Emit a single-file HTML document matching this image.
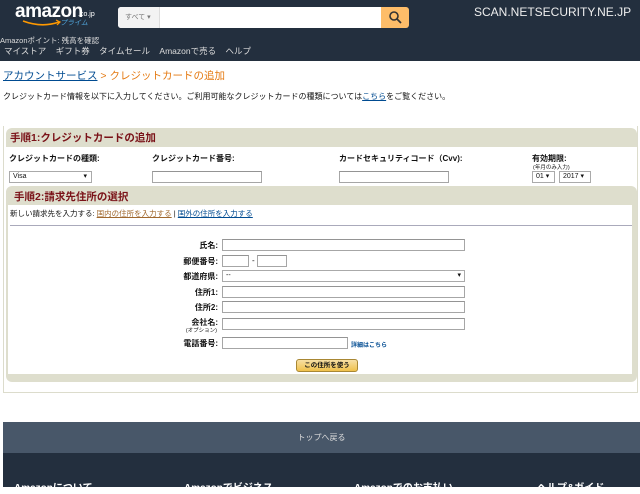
<!DOCTYPE html>
<html><head><meta charset="utf-8"><style>
*{margin:0;padding:0;box-sizing:border-box}
body{width:640px;height:487px;overflow:hidden;background:#fff;font-family:"Liberation Sans","Noto Sans CJK JP",sans-serif;font-size:8px;color:#111;position:relative}
.a{position:absolute;white-space:nowrap}
.in{position:absolute;height:12px;border:1px solid #a6a6a6;background:#fff;border-top-color:#949494}
.sel{position:absolute;height:12px;border:1px solid #aaa;background:#fff;font-size:7px;padding-left:3px;line-height:10px}
.lbl{position:absolute;right:422px;font-weight:bold;font-size:8px;text-align:right}
</style></head><body>
<div class="a" style="left:0;top:0;width:640px;height:61px;background:#232f3e"></div>
<div class="a" style="left:15px;top:1px;color:#fff;font-size:19px;font-weight:bold;letter-spacing:-0.5px">amazon</div>
<div class="a" style="left:78px;top:11px;color:#fff;font-size:7px">.co.jp</div>
<div class="a" style="left:60px;top:18px;color:#4fa3d8;font-size:7px;font-style:italic">プライム</div>
<svg class="a" style="left:22px;top:19px" width="40" height="8"><path d="M1 2 Q20 9 37 3" stroke="#f90" stroke-width="1.6" fill="none"/><path d="M34 1 L38 3 L35 6" stroke="#f90" stroke-width="1.2" fill="none"/></svg>
<div class="a" style="left:118px;top:7px;width:290px;height:21px;background:#fff;border-radius:3px"></div>
<div class="a" style="left:118px;top:7px;width:42px;height:21px;background:#f3f3f3;border-radius:3px 0 0 3px;border-right:1px solid #ddd;color:#777;font-size:7px;line-height:21px;padding-left:7px">すべて ▾</div>
<div class="a" style="left:381px;top:7px;width:28px;height:21px;background:#febd69;border-radius:0 3px 3px 0"></div>
<svg class="a" style="left:388px;top:10px" width="14" height="14"><circle cx="6" cy="6" r="4" stroke="#333" stroke-width="1.6" fill="none"/><path d="M9 9 L13 13" stroke="#333" stroke-width="1.8"/></svg>
<div class="a" style="left:474px;top:5px;color:#eee;font-size:12px">SCAN.NETSECURITY.NE.JP</div>
<div class="a" style="left:0;top:35px;color:#ddd;font-size:7.5px">Amazonポイント: 残高を確認</div>
<div class="a" style="left:4px;top:45px;color:#ddd;font-size:8.5px">マイストア&nbsp;&nbsp;&nbsp;&nbsp;ギフト券&nbsp;&nbsp;&nbsp;&nbsp;タイムセール&nbsp;&nbsp;&nbsp;&nbsp;Amazonで売る&nbsp;&nbsp;&nbsp;&nbsp;ヘルプ</div>
<div class="a" style="left:3px;top:68px;font-size:10.5px"><span style="color:#004b91;text-decoration:underline">アカウントサービス</span><span style="color:#e47911"> &gt; クレジットカードの追加</span></div>
<div class="a" style="left:3px;top:91px;font-size:8px">クレジットカード情報を以下に入力してください。ご利用可能なクレジットカードの種類については<span style="color:#004b91;text-decoration:underline">こちら</span>をご覧ください。</div>
<div class="a" style="left:3px;top:126px;width:635px;height:267px;border:1px solid #dcdccc;border-top:none"></div>
<div class="a" style="left:6px;top:128px;width:631px;height:19px;background:#dedecd;border-radius:6px 6px 0 0"></div>
<div class="a" style="left:10px;top:130px;color:#7a1218;font-size:10.5px;font-weight:bold">手順1:クレジットカードの追加</div>
<div class="a" style="left:9px;top:153px;font-weight:bold">クレジットカードの種類:</div>
<div class="a" style="left:152px;top:153px;font-weight:bold">クレジットカード番号:</div>
<div class="a" style="left:339px;top:153px;font-weight:bold">カードセキュリティコード（Cvv):</div>
<div class="a" style="left:532px;top:153px;font-weight:bold">有効期限:</div>
<div class="a" style="left:533px;top:163px;font-size:5.5px">(年月のみ入力)</div>
<div class="sel" style="left:9px;top:171px;width:83px">Visa<span style="float:right;padding-right:4px">▾</span></div>
<div class="in" style="left:152px;top:171px;width:110px"></div>
<div class="in" style="left:339px;top:171px;width:110px"></div>
<div class="sel" style="left:532px;top:171px;width:23px">01 ▾</div>
<div class="sel" style="left:559px;top:171px;width:32px">2017 ▾</div>
<div class="a" style="left:6px;top:186px;width:631px;height:196px;background:#dedecd;border-radius:6px"></div>
<div class="a" style="left:14px;top:189px;color:#7a1218;font-size:10.5px;font-weight:bold">手順2:請求先住所の選択</div>
<div class="a" style="left:8px;top:205px;width:624px;height:169px;background:#fff"></div>
<div class="a" style="left:10px;top:208px;font-size:7.5px">新しい請求先を入力する: <span style="color:#a0682e;text-decoration:underline">国内の住所を入力する</span> | <span style="color:#004b91;text-decoration:underline">国外の住所を入力する</span></div>
<div class="a" style="left:10px;top:225px;width:622px;height:1px;background:#aab"></div>
<div class="lbl" style="top:240px">氏名:</div>
<div class="lbl" style="top:256px">郵便番号:</div>
<div class="lbl" style="top:271px">都道府県:</div>
<div class="lbl" style="top:287px">住所1:</div>
<div class="lbl" style="top:302px">住所2:</div>
<div class="lbl" style="top:317px">会社名:</div>
<div class="a" style="right:423px;top:326px;font-size:5.5px">(オプション)</div>
<div class="lbl" style="top:338px">電話番号:</div>
<div class="in" style="left:222px;top:239px;width:243px"></div>
<div class="in" style="left:222px;top:255px;width:27px"></div>
<div class="a" style="left:252px;top:256px">-</div>
<div class="in" style="left:257px;top:255px;width:30px"></div>
<div class="sel" style="left:222px;top:270px;width:243px">--<span style="float:right;padding-right:3px">▾</span></div>
<div class="in" style="left:222px;top:286px;width:243px"></div>
<div class="in" style="left:222px;top:301px;width:243px"></div>
<div class="in" style="left:222px;top:318px;width:243px"></div>
<div class="in" style="left:222px;top:337px;width:126px"></div>
<div class="a" style="left:351px;top:340px;color:#004b91;font-size:6px;font-weight:bold">詳細はこちら</div>
<div class="a" style="left:296px;top:359px;width:62px;height:13px;border-radius:3px;border:1px solid #a88734;background:linear-gradient(#f7dfa5,#f0c14b);font-size:6.5px;font-weight:bold;text-align:center;line-height:11px">この住所を使う</div>
<div class="a" style="left:3px;top:422px;width:637px;height:32px;background:#485769;color:#ddd;text-align:center;line-height:32px;font-size:8px">トップへ戻る</div>
<div class="a" style="left:3px;top:453px;width:637px;height:34px;background:#232f3e"></div>
<div class="a" style="left:14px;top:479px;color:#fff;font-size:10px;font-weight:bold">Amazonについて</div>
<div class="a" style="left:184px;top:479px;color:#fff;font-size:10px;font-weight:bold">Amazonでビジネス</div>
<div class="a" style="left:354px;top:479px;color:#fff;font-size:10px;font-weight:bold">Amazonでのお支払い</div>
<div class="a" style="left:537px;top:479px;color:#fff;font-size:10px;font-weight:bold">ヘルプ&amp;ガイド</div>
</body></html>
